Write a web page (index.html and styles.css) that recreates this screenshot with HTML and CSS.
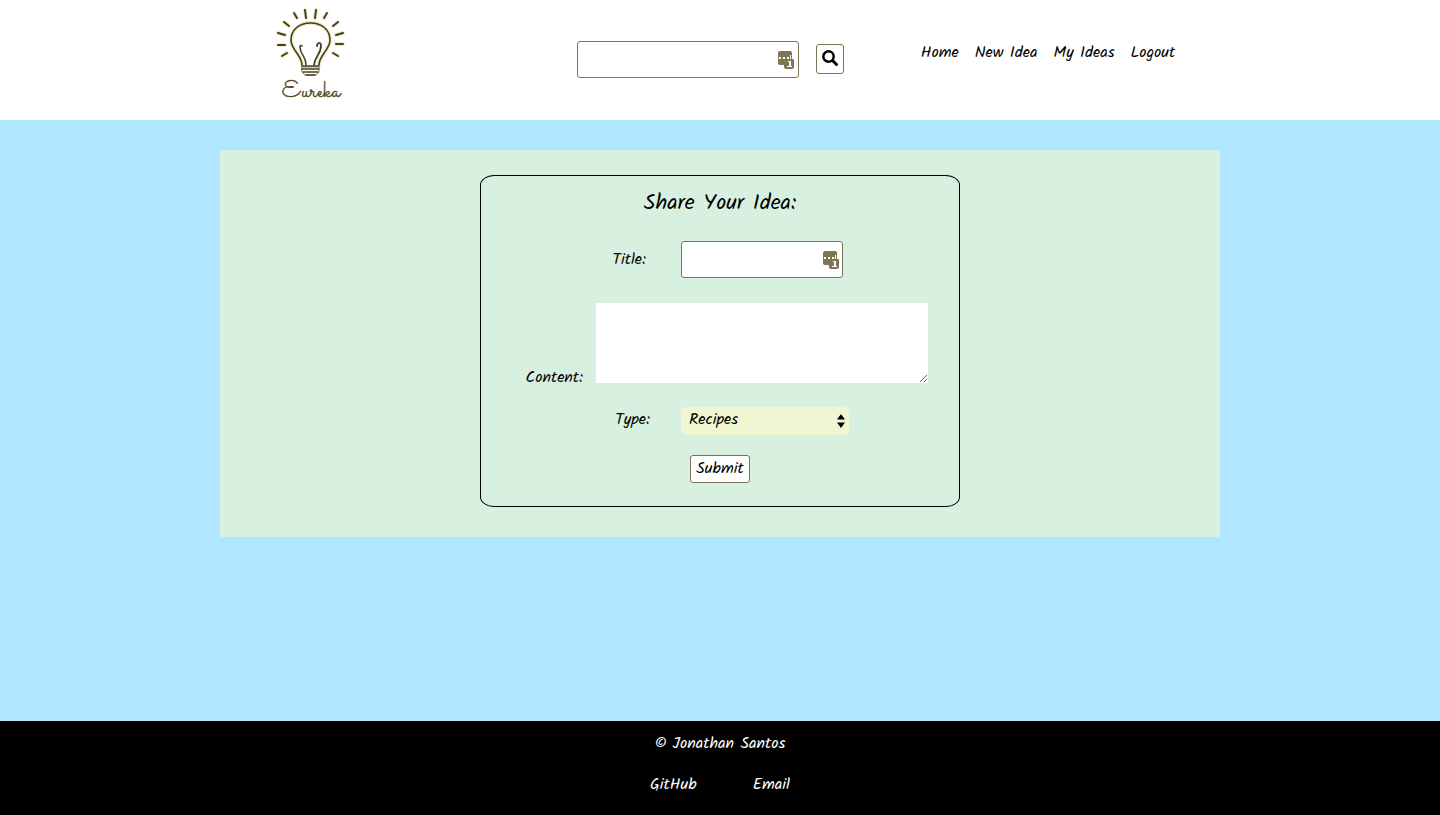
FILE: index.html
```html
<!DOCTYPE html>
<html lang="en">
<head>
<meta charset="utf-8">
<title>Eureka</title>
<link rel="stylesheet" href="styles.css">
</head>
<body>
<svg class="sprite" aria-hidden="true">
  <symbol id="autofill" viewBox="0 0 16 18">
    <path fill="#7d7654" d="M2 0h10a2 2 0 0 1 2 2v6h1a1 1 0 0 1 1 1v7a2 2 0 0 1-2 2H8a2 2 0 0 1-2-2v-2H2a2 2 0 0 1-2-2V2a2 2 0 0 1 2-2z"/>
    <path fill="#fff" d="M1 6h2v2H1zM5 6h2v2H5zM9 6h2v2H9zM12 4h1v4h-1z"/>
    <path fill="#fff" d="M9 11l2-1h2v5h1v1H9v-1h2v-4H9z"/>
  </symbol>
</svg>
<header class="header">
  <div class="bar">
    <a class="logo" href="#" aria-label="Eureka">
      <svg width="90" height="110" viewBox="0 0 90 110" fill="none" stroke="#45411f" stroke-width="2" stroke-linecap="round">
        <g stroke="#efedc8" stroke-width="4">
          <path d="M37 65c0-10-11-15-11-25 0-10 8-17 19.500-17S65 30 65 40c0 10-11 15-11 25"/>
          <path d="M40 10l1 8M51 10l-1 8M29 13l3 5M62 13l-3 5M19 22l5 4M73 22l-5 4M13 33l7 2M78 33l-7 2M13 45h7M78 44h-7M17 56l5-3M73 56l-5-3"/>
        </g>
        <path stroke-width="1.600" d="M37 65c0-10-11-15-11-25 0-10 8-17 19.500-17S65 30 65 40c0 10-11 15-11 25"/>
        <path stroke-width="1.600" d="M41 65c0-10-6-10-6-18 0-1 1-2 2-1"/>
        <path stroke-width="1.800" d="M49 65c1-9 7-11 7-19 0-5-4-3-4 0"/>
        <path stroke="#8d8864" stroke-width="1" d="M37 67h17v5l-3 3H40l-3-3z"/>
        <path stroke-width="1.600" d="M37 66h17M37 69h17M38 72h15M41 75h9"/>
        <path d="M40 10l1 8M51 10l-1 8M29 13l3 5M62 13l-3 5M19 22l5 4M73 22l-5 4M13 33l7 2M78 33l-7 2M13 45h7M78 44h-7M17 56l5-3M73 56l-5-3"/>
        <text class="logo-name" x="46" y="97" text-anchor="middle">Eureka</text>
      </svg>
    </a>
    <form class="search">
      <span class="field">
        <input class="box search-input" type="text" aria-label="Search ideas">
        <svg class="autofill" width="16" height="18" aria-hidden="true"><use href="#autofill"/></svg>
      </span>
      <button class="search-button" type="button" aria-label="Search">
        <svg width="16" height="16" viewBox="0 0 16 16" fill="none" stroke="#000" aria-hidden="true"><circle cx="6.500" cy="6.500" r="5.200" stroke-width="2.500"/><path stroke-width="3" stroke-linecap="round" d="M10.800 10.800l3.700 3.700"/></svg>
      </button>
    </form>
    <nav class="nav">
      <a href="#">Home</a>
      <a href="#">New Idea</a>
      <a href="#">My Ideas</a>
      <a href="#">Logout</a>
    </nav>
  </div>
</header>
<main class="panel">
  <form class="card">
    <h1 class="title">Share Your Idea:</h1>
    <div class="row row-title">
      <label class="label" for="title">Title:</label>
      <span class="field">
        <input class="box title-input" type="text" id="title">
        <svg class="autofill" width="16" height="18" aria-hidden="true"><use href="#autofill"/></svg>
      </span>
    </div>
    <div class="row row-content">
      <label class="label label-content" for="content">Content:</label>
      <textarea class="content" id="content"></textarea>
    </div>
    <div class="row">
      <label class="label label-type" for="type">Type:</label>
      <span class="field">
        <select class="type" id="type"><option>Recipes</option></select>
        <svg class="arrows" width="8" height="14" viewBox="0 0 8 14" aria-hidden="true"><path d="M4 0l4 5.500H0zM4 14l4-5.500H0z"/></svg>
      </span>
    </div>
    <button class="submit" type="button">Submit</button>
  </form>
</main>
<footer class="footer">
  <p class="copyright">© Jonathan Santos</p>
  <div class="links"><a href="#">GitHub</a><a href="#">Email</a></div>
</footer>
</body>
</html>
```
FILE: styles.css
```css
* { box-sizing: border-box; }
body {
  margin: 0;
  min-height: 100vh;
  display: flex;
  flex-direction: column;
  background: #b0e7ff;
  color: #000;
  font: 16px/26px Kalam, Lato, sans-serif;
}
input, textarea, select, button { font: inherit; color: inherit; }
a { color: inherit; text-decoration: none; }
.sprite { position: absolute; width: 0; height: 0; }
.header { background: #fff; }
.bar {
  display: grid;
  grid-template-columns: 180px 1fr 344px;
  max-width: 1000px;
  min-height: 120px;
  margin: 0 auto;
}
.logo { display: block; padding-left: 45px; }
.logo svg { display: block; }
.logo-name { font: 24px Sacramento, "Dancing Script", Kalam, cursive; fill: #4f4a24; stroke: #4f4a24; stroke-width: 0.4px; }
.search {
  display: flex;
  align-items: center;
  justify-content: flex-end;
  gap: 17px;
  padding: 0 32px 2px 0;
}
.field { position: relative; display: flex; }
.box {
  height: 37px;
  padding: 4px 28px 4px 8px;
  border: 1px solid #7d7654;
  border-radius: 3px;
  background: #fff;
}
.search-input { width: 222px; }
.autofill { position: absolute; right: 4px; top: 10px; pointer-events: none; }
.search .autofill { right: 5px; }
.search-button {
  display: flex;
  align-items: center;
  justify-content: center;
  width: 28px;
  height: 30px;
  padding: 0 0 2px;
  border: 1px solid #7d7654;
  border-radius: 3px;
  background: #fff;
}
.nav {
  display: flex;
  align-items: center;
  justify-content: center;
  gap: 16px;
  padding-bottom: 14px;
  white-space: nowrap;
}
.panel {
  width: 100%;
  max-width: 1000px;
  margin: 30px auto;
  padding: 25px 0 30px;
  background: #d8f0df;
}
.card {
  width: 480px;
  max-width: 100%;
  margin: 0 auto;
  padding: 12px 0 23px;
  border: 1px solid #000;
  border-radius: 3%;
}
.title { margin: 0 0 21px; font-size: 22px; line-height: 32px; font-weight: 400; text-align: center; }
.row { display: flex; margin-bottom: 20px; }
.row-title { margin-bottom: 25px; }
.row-content { align-items: flex-end; margin-bottom: 24px; }
.label { width: 200px; padding: 6px 35px 0 0; text-align: right; }
.label-content { width: 115px; padding: 0 13px 0 0; line-height: 10px; }
.label-type { padding: 0 31px 0 0; }
.title-input { width: 162px; }
.content { display: block; width: 332px; height: 80px; padding: 4px 8px; border: 0; background: #fff; }
.type {
  appearance: none;
  width: 168px;
  height: 28px;
  padding: 0 20px 2px 8px;
  border: 0;
  border-radius: 5px;
  background: #f0f5d2;
}
.arrows { position: absolute; right: 4px; top: 7px; pointer-events: none; }
.submit {
  display: block;
  width: 60px;
  height: 28px;
  margin: 0 auto;
  padding: 0 0 2px;
  border: 1px solid #7d7654;
  border-radius: 3px;
  background: #fff;
}
.footer { margin-top: auto; padding: 10px 0 17px; background: #000; color: #fff; }
.copyright { margin: 0 0 15px; text-align: center; }
.links { display: flex; justify-content: center; gap: 56px; }
```
